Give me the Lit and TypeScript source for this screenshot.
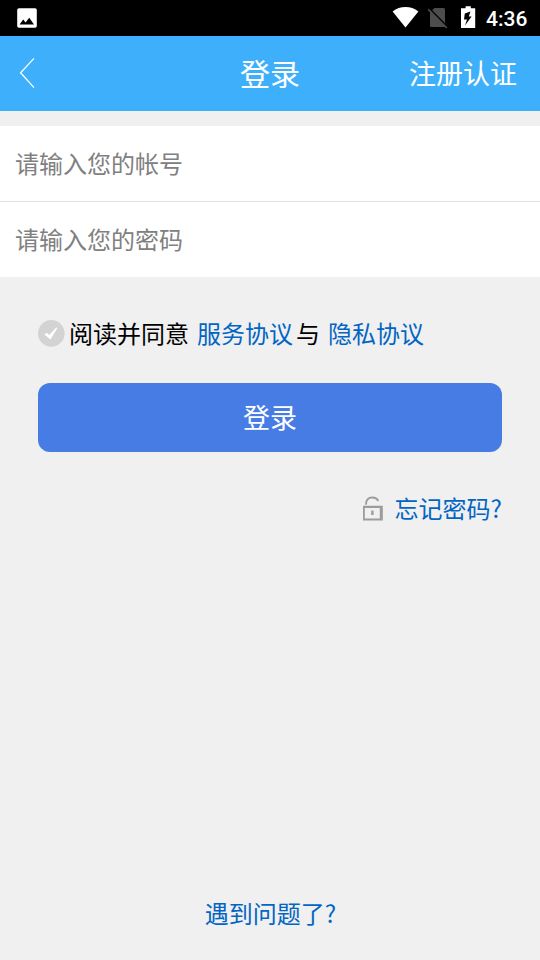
// app.ts
import { LitElement, html, css, svg, CSSResult, TemplateResult } from 'lit';
import { customElement, property, state } from 'lit/decorators.js';

@customElement('status-bar')
export class StatusBar extends LitElement {
  @property({ type: String }) time: string = '';

  static get styles(): CSSResult {
    return css`
      :host {
        display: flex;
        align-items: center;
        height: 36px;
        background: #000;
        color: #fff;
      }
      svg {
        display: block;
        flex: none;
      }
      .picture {
        margin-left: 16px;
      }
      .system {
        display: flex;
        align-items: center;
        margin-left: auto;
        padding-right: 12px;
      }
      .time {
        width: 42px;
        margin-left: 8px;
        padding-top: 2px;
        font: 500 21px/34px Roboto, sans-serif;
        white-space: nowrap;
      }
    `;
  }

  render(): TemplateResult {
    return html`
      <svg class="picture" width="22" height="36" viewBox="0 0 22 36">
        <rect x="1.2" y="8.2" width="19.6" height="19.6" rx="1.8" fill="#fff"></rect>
        <path d="M3.6 24.6 L7.2 19.6 L9.6 22.4 L13.2 17.8 L18 24.6 Z" fill="#000"></path>
      </svg>
      <div class="system">
        <svg width="86" height="36" viewBox="392 0 86 36">
          <path d="M392.6 11.4 Q398.3 7 405.5 7 Q412.7 7 418.4 11.4 L405.5 27.6 Z" fill="#fff"></path>
          <path d="M434.6 8 H443.4 Q445 8 445 9.6 V25.4 Q445 27 443.4 27 H431.6 Q430 27 430 25.4 V12 Z" fill="#4d4d4d"></path>
          <path d="M429.4 8.6 L448 27.2" stroke="#000" stroke-width="1.6"></path>
          <path d="M428.2 9.4 L446.8 28" stroke="#4d4d4d" stroke-width="1.7"></path>
          <path d="M465.6 6.2 H470.8 V8.2 H475.2 V28 H461 V8.2 H465.6 Z" fill="#fff"></path>
          <path d="M470.4 11.4 L464.8 13.4 L464 19.4 H467 L465 25.6 L471.6 16.4 H468.8 Z" fill="#000"></path>
        </svg>
        <span class="time">${this.time}</span>
      </div>
    `;
  }
}

@customElement('app-root')
export class AppRoot extends LitElement {
  @state() private agreed: boolean = false;

  static get styles(): CSSResult {
    return css`
      :host {
        display: flex;
        flex-direction: column;
        height: 960px;
        background: #f0f0f0;
        color: #000;
        font: 24px/36px 'Noto Sans CJK SC', sans-serif;
      }
      svg {
        display: block;
        flex: none;
      }
      a {
        color: #0265c3;
        text-decoration: none;
      }
      .header {
        display: grid;
        grid-template-columns: 1fr auto 1fr;
        align-items: center;
        height: 75px;
        padding: 0 23px 0 18px;
        background: #3eb0fb;
        color: #fff;
      }
      .back {
        margin-bottom: 2px;
      }
      .title {
        margin: 0;
        padding-bottom: 4px;
        font-size: 30px;
        font-weight: 400;
        transform: translateX(2.5px);
      }
      .register {
        justify-self: end;
        padding-bottom: 2px;
        color: #fff;
        font-size: 27px;
      }
      .fields {
        margin-top: 15px;
      }
      .field {
        display: block;
        box-sizing: border-box;
        width: 100%;
        height: 75px;
        margin: 0;
        padding: 0 15px 2px;
        border: 0;
        border-radius: 0;
        outline: none;
        background: #fff;
        font: inherit;
      }
      .field::placeholder {
        color: #808080;
        opacity: 1;
      }
      .field + .field {
        height: 76px;
        border-top: 1px solid #e0e0e0;
      }
      .agreement {
        display: flex;
        align-items: center;
        height: 36px;
        margin: 38px 38px 0;
        white-space: nowrap;
      }
      .check {
        margin-right: 4px;
      }
      .terms {
        margin: 0 3px 0 8px;
      }
      .privacy {
        margin-left: 8px;
      }
      .login {
        height: 69px;
        margin: 32px 38px 0;
        padding: 0 0 2px;
        border: 0;
        border-radius: 12px;
        background: #477ce5;
        color: #fff;
        font: inherit;
        font-size: 27px;
      }
      .forgot {
        display: flex;
        align-items: center;
        justify-content: flex-end;
        gap: 11px;
        height: 36px;
        margin: 38px 38px 0;
      }
      .lock {
        margin-top: 2px;
      }
      .help {
        margin: auto 0 29px;
        padding-left: 1px;
        text-align: center;
      }
    `;
  }

  private toggleAgreed(): void {
    this.agreed = !this.agreed;
  }

  private renderLock(): TemplateResult {
    return html`
      <svg class="lock" width="22" height="26" viewBox="362 496 22 26">
        ${svg`
          <path d="M366 504.6 C365.6 500 368.4 497.6 372.2 497.6 C375 497.6 377.2 498.8 378.2 501" fill="none" stroke="#9c9c9c" stroke-width="2"></path>
          <path fill-rule="evenodd" d="M363 505.7 H382.8 V520.5 H363 Z M364.8 508 V518.4 H379.8 V508 Z" fill="#9c9c9c"></path>
          <rect x="371.2" y="510.6" width="2.4" height="4.4" fill="#9c9c9c"></rect>
        `}
      </svg>
    `;
  }

  render(): TemplateResult {
    return html`
      <status-bar time="4:36"></status-bar>
      <header class="header">
        <svg class="back" width="18" height="32" viewBox="18 57 18 32">
          <path d="M34 58.4 L20.6 72.8 L34 87.6" fill="none" stroke="#fff" stroke-width="1.3"></path>
        </svg>
        <h1 class="title">登录</h1>
        <a class="register">注册认证</a>
      </header>

      <div class="fields">
        <input class="field" type="text" placeholder="请输入您的帐号" />
        <input class="field" type="password" placeholder="请输入您的密码" />
      </div>

      <div class="agreement">
        <svg class="check" width="27" height="27" viewBox="0 0 27 27" @click=${this.toggleAgreed}>
          <circle cx="13.3" cy="13.4" r="13.3" fill="${this.agreed ? '#477ce5' : '#d3d3d3'}"></circle>
          <path d="M6.4 14.4 L8.8 12.8 L11.2 15 L18.2 7.4 L19.4 8 L12.4 19.4 Z" fill="#fff"></path>
        </svg>
        <span>阅读并同意</span>
        <a class="terms">服务协议</a>
        <span>与</span>
        <a class="privacy">隐私协议</a>
      </div>

      <button class="login" type="button">登录</button>

      <div class="forgot">
        ${this.renderLock()}
        <a>忘记密码?</a>
      </div>

      <div class="help"><a>遇到问题了?</a></div>
    `;
  }
}
